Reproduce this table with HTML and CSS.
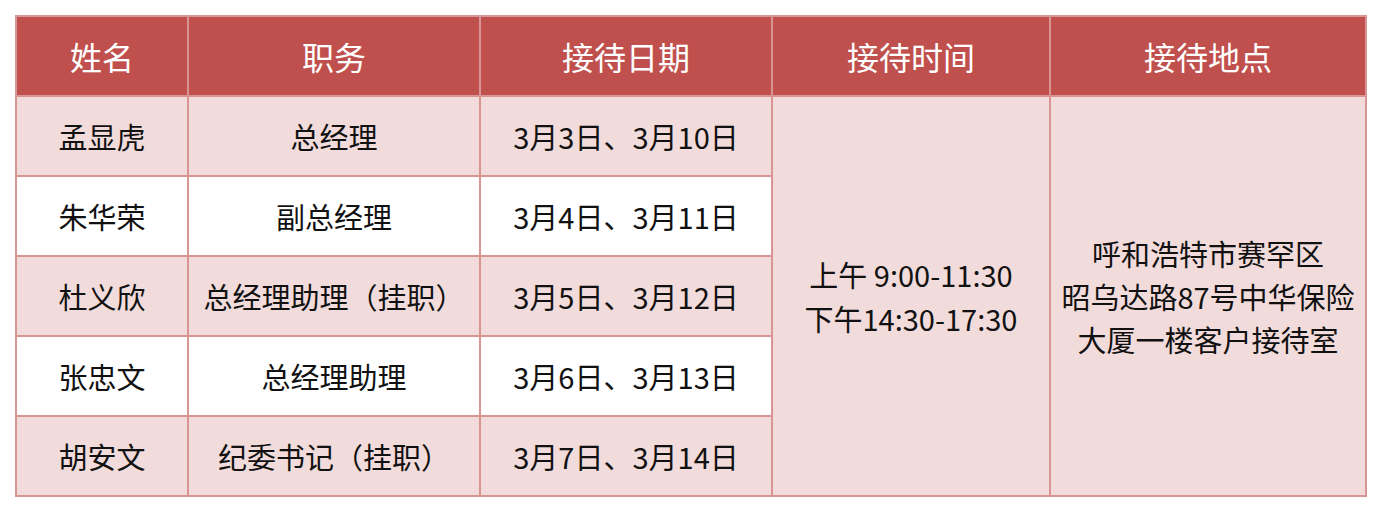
FILE: index.html
```html
<!DOCTYPE html>
<html lang="zh-CN">
<head>
<meta charset="utf-8">
<link rel="stylesheet" href="styles.css">
</head>
<body>
<table class="schedule">
  <colgroup>
    <col class="c-name">
    <col class="c-post">
    <col class="c-date">
    <col class="c-time">
    <col class="c-place">
  </colgroup>
  <thead>
    <tr>
      <th>姓名</th>
      <th>职务</th>
      <th>接待日期</th>
      <th>接待时间</th>
      <th>接待地点</th>
    </tr>
  </thead>
  <tbody>
    <tr class="tint">
      <td>孟显虎</td>
      <td>总经理</td>
      <td>3月3日、3月10日</td>
      <td class="merged" rowspan="5">上午 9:00-11:30<br>下午14:30-17:30</td>
      <td class="merged place" rowspan="5">呼和浩特市赛罕区<br>昭乌达路87号中华保险<br>大厦一楼客户接待室</td>
    </tr>
    <tr>
      <td>朱华荣</td>
      <td>副总经理</td>
      <td>3月4日、3月11日</td>
    </tr>
    <tr class="tint">
      <td>杜义欣</td>
      <td>总经理助理（挂职）</td>
      <td>3月5日、3月12日</td>
    </tr>
    <tr>
      <td>张忠文</td>
      <td>总经理助理</td>
      <td>3月6日、3月13日</td>
    </tr>
    <tr class="tint">
      <td>胡安文</td>
      <td>纪委书记（挂职）</td>
      <td>3月7日、3月14日</td>
    </tr>
  </tbody>
</table>
</body>
</html>
```

FILE: styles.css
```css
html, body {
  margin: 0;
  padding: 0;
  background: #ffffff;
}
body {
  padding: 15px;
  font-family: "Noto Sans CJK SC", "Noto Sans", sans-serif;
}
.schedule {
  border-collapse: collapse;
  table-layout: fixed;
  width: 1350px;
  color: #111111;
  font-size: 29px;
}
.c-name { width: 172px; }
.c-post { width: 292px; }
.c-date { width: 292px; }
.c-time { width: 278px; }
.c-place { width: 316px; }
.schedule th,
.schedule td {
  border: 2px solid #d99594;
  height: 78px;
  padding: 0;
  text-align: center;
  vertical-align: middle;
  white-space: nowrap;
  line-height: 44px;
}
.schedule th {
  background: #c0504d;
  color: #ffffff;
  font-weight: normal;
  font-size: 32px;
}
.schedule tbody td {
  background: #ffffff;
}
.schedule tbody tr.tint td,
.schedule td.merged {
  background: #f2dbdb;
}
.schedule td.place {
  line-height: 43px;
}
```
